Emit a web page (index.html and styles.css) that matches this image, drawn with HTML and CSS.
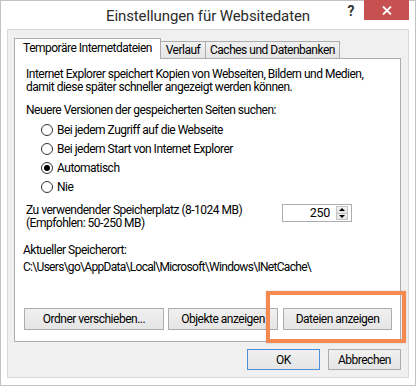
FILE: index.html
```html
<html lang="de">

<head>
    <meta charset="UTF-8">
    <title>Einstellungen für Websitedaten</title>
    <link rel="stylesheet" href="styles.css">
</head>

<body>
    <div class="window">
        <div class="titlebar">
            <span></span>
            <div class="title">Einstellungen für Websitedaten</div>
            <div class="caption-buttons">
                <span class="help">?</span>
                <span class="close">
                    <svg width="10" height="9" viewBox="0 0 10 9">
                        <path d="M1 0.5 L9 8.5 M9 0.5 L1 8.5" stroke="#fff" stroke-width="1.8" fill="none" />
                    </svg>
                </span>
            </div>
        </div>

        <div class="client">
            <!-- Tab strip -->
            <div class="tabs">
                <div class="tab tab-temp active">Temporäre Internetdateien</div>
                <div class="tab tab-history">Verlauf</div>
                <div class="tab tab-caches">Caches und Datenbanken</div>
            </div>

            <div class="panel">
                <p class="intro">Internet Explorer speichert Kopien von Webseiten, Bildern und Medien,<br>damit diese später schneller angezeigt werden können.</p>

                <div class="group-label">Neuere Versionen der gespeicherten Seiten suchen:</div>
                <div class="radios">
                    <label class="radio-row"><span class="radio"></span>Bei jedem Zugriff auf die Webseite</label>
                    <label class="radio-row"><span class="radio"></span>Bei jedem Start von Internet Explorer</label>
                    <label class="radio-row"><span class="radio checked"></span>Automatisch</label>
                    <label class="radio-row"><span class="radio"></span>Nie</label>
                </div>

                <div class="quota-row">
                    <div class="quota-label">Zu verwendender Speicherplatz (8-1024 MB)<br>(Empfohlen: 50-250 MB)</div>
                    <div class="spinner">
                        <span class="spin-value">250</span>
                        <span class="spin-buttons">
                            <span class="spin-btn"><span class="arrow-up"></span></span>
                            <span class="spin-btn"><span class="arrow-down"></span></span>
                        </span>
                    </div>
                </div>

                <div class="location">
                    <div>Aktueller Speicherort:</div>
                    <div class="path">C:\Users\go\AppData\Local\Microsoft\Windows\INetCache\</div>
                </div>

                <div class="panel-buttons">
                    <button class="btn btn-move">Ordner verschieben...</button>
                    <button class="btn btn-objects">Objekte anzeigen</button>
                    <button class="btn btn-files">Dateien anzeigen</button>
                </div>
            </div>

            <div class="dialog-buttons">
                <button class="btn btn-default">OK</button>
                <button class="btn">Abbrechen</button>
            </div>
        </div>

        <!-- annotation frame around "Dateien anzeigen" -->
        <div class="highlight"></div>
    </div>
</body>

</html>
```
FILE: styles.css
```css
* {
    margin: 0;
    padding: 0;
    box-sizing: border-box;
}

body {
    font-family: Roboto, 'Liberation Sans', sans-serif;
    font-size: 12px;
    letter-spacing: -0.5px;
    color: #000;
    background-color: #fff;
}

.window {
    position: relative;
    width: 416px;
    height: 386px;
    background-color: #fff;
    border: 1px solid #c2c2c2;
    display: flex;
    flex-direction: column;
}

/* Title bar */
.titlebar {
    height: 28px;
    display: grid;
    grid-template-columns: 1fr auto 1fr;
}

.title {
    font-size: 15px;
    letter-spacing: -0.1px;
    color: #2b2b2b;
    line-height: 28px;
    padding-top: 1px;
}

.caption-buttons {
    display: flex;
    justify-content: flex-end;
    align-items: flex-start;
    padding-right: 6px;
}

.help {
    width: 26px;
    height: 20px;
    line-height: 20px;
    text-align: center;
    font-weight: 700;
    font-size: 14px;
    color: #333;
    letter-spacing: 0;
}

.close {
    width: 45px;
    height: 20px;
    margin-top: -1px;
    background-color: #c75050;
    display: flex;
    align-items: center;
    justify-content: center;
}

/* Client area */
.client {
    flex: 1;
    margin: 0 6px 7px 6px;
    border: 1px solid #d9d9d9;
    background-color: #f0f0f0;
    padding: 8px 7px 7px 6px;
    display: flex;
    flex-direction: column;
}

.tabs {
    height: 20px;
    display: flex;
    align-items: flex-end;
}

.tab {
    height: 17px;
    line-height: 16px;
    text-align: center;
    border: 1px solid #adadad;
    border-bottom: none;
    background: linear-gradient(#f0f0f0, #e5e5e5);
    margin-left: -1px;
}

.tab.active {
    position: relative;
    z-index: 1;
    height: 21px;
    line-height: 19px;
    margin-left: 0;
    margin-bottom: -1px;
    background: #fff;
}

.tab-temp {
    width: 147px;
}

.tab-history {
    width: 46px;
}

.tab-caches {
    width: 135px;
}

.panel {
    height: 284px;
    background-color: #fff;
    border: 1px solid #adadad;
    padding: 9px 8px 11px 0;
    display: flex;
    flex-direction: column;
}

.intro {
    line-height: 13px;
    padding-left: 11px;
}

.group-label {
    margin-top: 7px;
    line-height: 19px;
    padding-left: 11px;
}

.radios {
    padding-left: 26px;
}

.radio-row {
    display: flex;
    align-items: center;
    gap: 4px;
    height: 19px;
}

.radio {
    width: 12px;
    height: 12px;
    border: 1px solid #333;
    border-radius: 50%;
    background-color: #fff;
    display: flex;
    align-items: center;
    justify-content: center;
}

.radio.checked::after {
    content: '';
    width: 6px;
    height: 6px;
    border-radius: 50%;
    background-color: #000;
}

/* Disk space row */
.quota-row {
    margin-top: 8px;
    padding-left: 11px;
    display: flex;
    align-items: flex-start;
}

.quota-label {
    width: 256px;
    line-height: 13px;
}

.spinner {
    width: 70px;
    height: 18px;
    border: 1px solid #abadb3;
    display: flex;
}

.spin-value {
    flex: 1;
    text-align: right;
    padding-right: 6px;
    line-height: 16px;
    font-size: 12.5px;
    letter-spacing: -0.3px;
}

.spin-buttons {
    width: 12px;
    margin: 1px 3px 1px 0;
    display: flex;
    flex-direction: column;
}

.spin-btn {
    flex: 1;
    border: 1px solid #c4c4c4;
    background: linear-gradient(#f2f2f2, #e3e3e3);
    display: flex;
    align-items: center;
    justify-content: center;
}

.spin-btn + .spin-btn {
    border-top: none;
}

.arrow-up {
    border-left: 3px solid transparent;
    border-right: 3px solid transparent;
    border-bottom: 3px solid #000;
}

.arrow-down {
    border-left: 3px solid transparent;
    border-right: 3px solid transparent;
    border-top: 3px solid #000;
}

.location {
    margin-top: 12px;
    padding-left: 8px;
    line-height: 17px;
}

.path {
    letter-spacing: -0.7px;
}

/* Buttons */
.btn {
    font-family: inherit;
    font-size: 12px;
    letter-spacing: -0.5px;
    color: #000;
    height: 22px;
    border: 1px solid #acacac;
    background: linear-gradient(#f0f0f0, #e5e5e5);
}

.panel-buttons {
    margin-top: auto;
    padding-left: 9px;
    display: flex;
    gap: 4px;
}

.btn-move {
    width: 140px;
}

.btn-objects {
    width: 110px;
}

.btn-files {
    width: 109px;
    margin-left: 1px;
}

.dialog-buttons {
    margin-top: 7px;
    display: flex;
    justify-content: flex-end;
    gap: 8px;
}

.dialog-buttons .btn {
    width: 73px;
    height: 21px;
}

.btn-default {
    border-color: #4d90d6;
}

.highlight {
    position: absolute;
    left: 265px;
    top: 290px;
    width: 140px;
    height: 52px;
    border: 4px solid #f5894f;
    box-shadow: 0 0 2px rgba(0, 0, 0, 0.15);
}
```
